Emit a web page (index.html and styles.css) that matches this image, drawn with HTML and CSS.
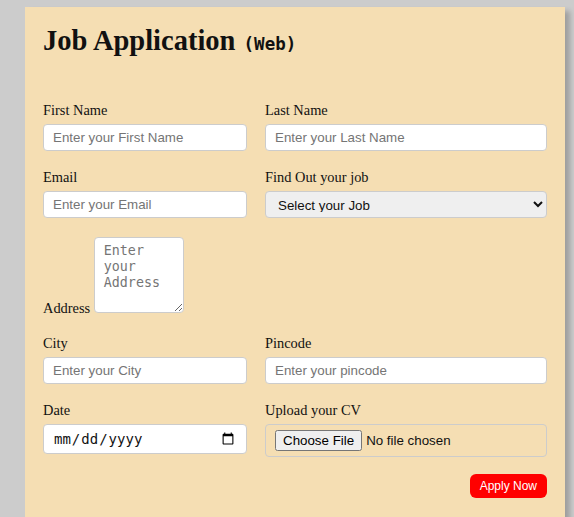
FILE: index.html
```html
<!DOCTYPE html>
<html lang="en">
<head>
<meta charset="utf-8">
<title>Job Application</title>
<link rel="stylesheet" href="styles.css">
</head>
<body>
<div class="card">
  <h1 class="title">Job Application <span class="tag">(Web)</span></h1>
  <form class="form">
    <div class="field">
      <label class="label">First Name</label>
      <input class="control" type="text" placeholder="Enter your First Name">
    </div>
    <div class="field">
      <label class="label">Last Name</label>
      <input class="control" type="text" placeholder="Enter your Last Name">
    </div>
    <div class="field">
      <label class="label">Email</label>
      <input class="control" type="email" placeholder="Enter your Email">
    </div>
    <div class="field">
      <label class="label">Find Out your job</label>
      <select class="control select">
        <option>Select your Job</option>
      </select>
    </div>
    <div class="address">
      <label class="label-inline">Address</label> <textarea class="textarea" placeholder="Enter your Address"></textarea>
    </div>
    <div class="field">
      <label class="label">City</label>
      <input class="control" type="text" placeholder="Enter your City">
    </div>
    <div class="field">
      <label class="label">Pincode</label>
      <input class="control" type="text" placeholder="Enter your pincode">
    </div>
    <div class="field">
      <label class="label">Date</label>
      <input class="control date" type="date">
    </div>
    <div class="field">
      <label class="label">Upload your CV</label>
      <input class="control file" type="file">
    </div>
    <div class="actions">
      <button class="apply" type="button">Apply Now</button>
    </div>
  </form>
</div>
</body>
</html>
```

FILE: styles.css
```css
html, body {
  margin: 0;
  height: 100%;
}

body {
  background: #cccccc;
  padding: 7px 0 0 25px;
  box-sizing: border-box;
  overflow: hidden;
  font-family: "Liberation Serif", "Times New Roman", serif;
  color: #111;
}

.card {
  width: 540px;
  box-sizing: border-box;
  background: #f5deb3;
  padding: 18px 18px 40px;
  box-shadow: 5px 4px 5px rgba(0, 0, 0, 0.22);
}

.title {
  margin: 0 0 42px;
  font-size: 28.5px;
  font-weight: bold;
  line-height: 32px;
}

.tag {
  margin-left: 1px;
  font-family: "DejaVu Sans Mono", monospace;
  font-size: 17.5px;
  font-weight: bold;
}

.form {
  display: grid;
  grid-template-columns: 204px 282px;
  column-gap: 18px;
  row-gap: 18px;
}

.field {
  display: flex;
  flex-direction: column;
}

.label {
  display: block;
  font-size: 14.4px;
  line-height: 16px;
  margin-bottom: 6px;
}

.label-inline {
  font-size: 14.4px;
}

.address {
  grid-column: 1 / -1;
  padding-top: 1px;
  font-size: 14.4px;
}

.control {
  box-sizing: border-box;
  width: 100%;
  margin: 0;
  padding: 5px 9px;
  border: 1px solid #cccccc;
  border-radius: 4px;
  background: #ffffff;
  font-family: "Liberation Sans", Arial, sans-serif;
  font-size: 13.33px;
  line-height: 15px;
  color: #111;
}

.control::placeholder {
  color: #757575;
}

.select {
  background: #efefef;
  padding: 5px 8px;
  height: 27px;
}

.date {
  font-family: "DejaVu Sans Mono", monospace;
  font-size: 14px;
  height: 30px;
}

.file {
  background: transparent;
  padding: 5px 9px;
}

.textarea {
  box-sizing: border-box;
  width: 90px;
  height: 76px;
  margin: 0;
  padding: 5px 9px;
  border: 1px solid #cccccc;
  border-radius: 4px;
  background: #ffffff;
  font-family: "DejaVu Sans Mono", monospace;
  font-size: 13.33px;
  line-height: 16px;
  vertical-align: baseline;
}

.textarea::placeholder {
  color: #757575;
}

.actions {
  grid-column: 1 / -1;
  display: flex;
  justify-content: flex-end;
  margin-top: -1px;
}

.apply {
  background: #ff0000;
  color: #ffffff;
  border: none;
  border-radius: 6px;
  padding: 4px 10px;
  font-family: "Liberation Sans", Arial, sans-serif;
  font-size: 12px;
  line-height: 16px;
}
```
